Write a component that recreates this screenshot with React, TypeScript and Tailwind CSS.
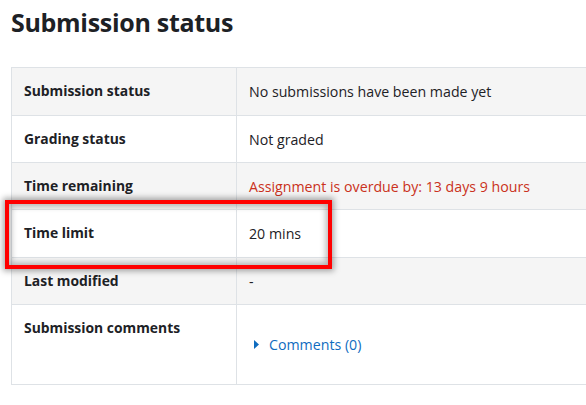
import React from 'react';

const rows: { label: string; value: React.ReactNode; h: string }[] = [
    { label: 'Submission status', value: 'No submissions have been made yet', h: 'h-[48px]' },
    { label: 'Grading status', value: 'Not graded', h: 'h-[47px]' },
    { label: 'Time remaining', value: <span className="text-[#ca3120]">Assignment is overdue by: 13 days 9 hours</span>, h: 'h-[47px]' },
    { label: 'Time limit', value: '20 mins', h: 'h-[48px]' },
    { label: 'Last modified', value: '-', h: 'h-[47px]' },
    {
        label: 'Submission comments',
        h: 'h-[80px]',
        value: (
            <a className="flex items-center gap-[10px] pl-[5px] pt-[16px] text-[#0f6cbf]">
                <svg width="5" height="9" viewBox="0 0 5 9"><path d="M0 0 L5 4.5 L0 9 Z" fill="#0f6cbf" /></svg>
                Comments (0)
            </a>
        ),
    },
];

export default function App() {
    return (
        <div className="relative w-[586px] h-[405px] overflow-hidden bg-white text-[#1d2125]" style={{ fontFamily: '"Open Sans", "Noto Sans", sans-serif' }}>
            <h2 className="pl-[11px] pt-[4px] text-[25px] font-bold leading-[36px] tracking-[-0.3px]">Submission status</h2>

            <table className="ml-[11px] mt-[27px] w-[700px] border-collapse">
                <tbody>
                    {rows.map((r, i) => (
                        <tr key={r.label} className={`${r.h} ${i % 2 === 0 ? 'bg-[#f5f5f5]' : 'bg-white'}`}>
                            <th className="w-[225px] border border-[#dee2e6] px-[12px] pt-[13px] text-left align-top text-[13.9px] font-bold">
                                {r.label}
                            </th>
                            <td className="border border-[#dee2e6] px-[12px] pt-[13px] align-top text-[14.2px]">
                                {r.value}
                            </td>
                        </tr>
                    ))}
                </tbody>
            </table>

            {/* highlight box */}
            <div className="absolute left-[5px] top-[200px] h-[69px] w-[327px] border-[4px] border-[#ff0000] shadow-[0_0_6px_2px_rgba(0,0,0,0.35),inset_0_0_6px_2px_rgba(0,0,0,0.3)]" />
        </div>
    );
}
